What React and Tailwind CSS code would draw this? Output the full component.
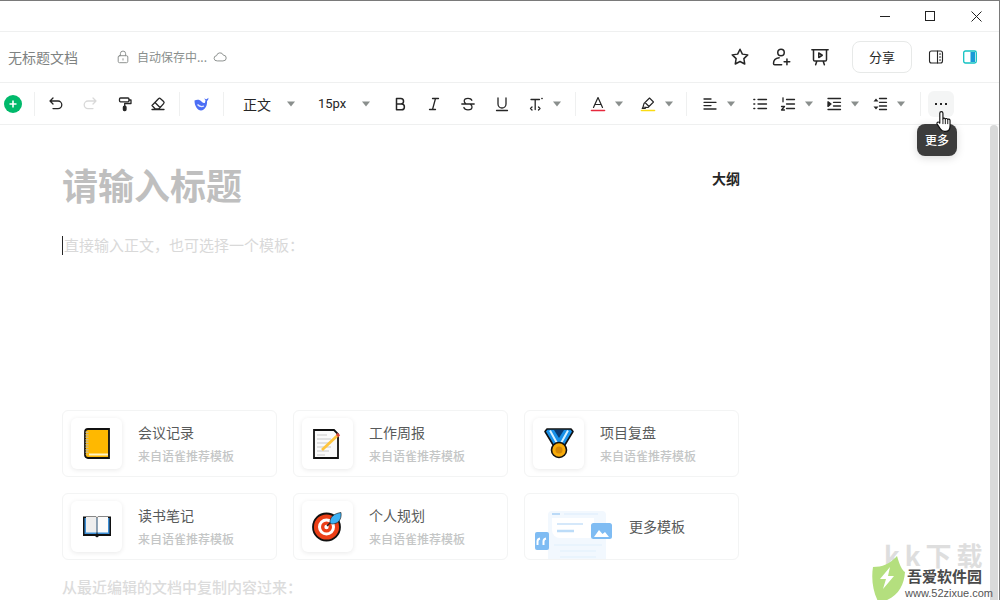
import { useState } from "react";

const Caret = ({ className = "" }) => (
  <svg width="10" height="6" viewBox="0 0 10 6" className={className}>
    <path d="M1 .5h8L5 5.500z" fill="#8a8f8d" />
  </svg>
);

const Sep = ({ className = "" }) => <div className={`w-px h-6 bg-[#eff0f0] shrink-0 ${className}`} />;

const Ico = ({ children, size = 16, box = 16, className = "", sw = 1.3, color = "#262626" }) => (
  <svg
    width={size}
    height={size}
    viewBox={`0 0 ${box} ${box}`}
    fill="none"
    stroke={color}
    strokeWidth={sw}
    strokeLinecap="round"
    strokeLinejoin="round"
    className={`shrink-0 ${className}`}
  >
    {children}
  </svg>
);

const Lines = ({ rows }) =>
  rows.map((r, i) => <path key={i} d={r} />);

const Card = ({ icon, title }) => (
  <div className="h-[67px] border border-[#f3f4f4] rounded-md flex items-center pl-2 bg-white">
    <div className="w-[51px] h-[51px] rounded-md bg-white shadow-[0_1px_5px_rgba(0,0,0,0.09)] flex items-center justify-center shrink-0">
      {icon}
    </div>
    <div className="ml-4 mb-[2px]">
      <div className="text-sm leading-5 text-[#585a5a]">{title}</div>
      <div className="text-xs leading-4 mt-[6px] text-[#c4c6c6] font-medium">来自语雀推荐模板</div>
    </div>
  </div>
);

const NoteBook = () => (
  <svg width="26" height="31" viewBox="0 0 26 31">
    <path d="M4 1h21v29H4a3 3 0 0 1-3-3V4a3 3 0 0 1 3-3z" fill="#ffb800" stroke="#111" strokeWidth="1.800" />
    <path d="M3 3.500v23" stroke="#c9b98a" strokeWidth="3" strokeDasharray="1.500 1" />
    <path d="M5 26.500h19" stroke="#fff3c4" strokeWidth="2" />
  </svg>
);

const Report = () => (
  <svg width="30" height="30" viewBox="0 0 30 30">
    <path d="M1 1h20l4 4v24H1z" fill="#fafafa" stroke="#111" strokeWidth="1.800" />
    <path d="M4 6h10M4 10h14M4 14h14M4 18h14M4 22h12M4 26h8" stroke="#c8c8c8" strokeWidth="1.200" />
    <path d="M9 21 25 6" stroke="#ffc53d" strokeWidth="2.800" />
    <path d="m24 7 2-2" stroke="#d4453a" strokeWidth="3.200" />
  </svg>
);

const Medal = () => (
  <svg width="30" height="31" viewBox="0 0 30 31">
    <path d="M1 3.500 3 1h24l2 2.500L19 20h-8z" fill="#1890e8" stroke="#111" strokeWidth="1.600" strokeLinejoin="round" />
    <path d="M6 2.500 14 17M24 2.500 16 17" stroke="#d6f0ff" strokeWidth="2" />
    <path d="M10 2h10l-5 8z" fill="#0b3b73" />
    <circle cx="15" cy="22" r="7.500" fill="#f7ab0a" stroke="#111" strokeWidth="1.600" />
    <circle cx="15" cy="22" r="3.500" fill="#d48806" />
  </svg>
);

const OpenBook = () => (
  <svg width="30" height="25" viewBox="0 0 30 25">
    <path d="M1 2.500h13l1 1 1-1h13V22H17l-2 1.500-2-1.500H1z" fill="#111" />
    <path d="M2.500 4h12v16h-12z" fill="#3d8fd6" />
    <path d="M15.500 4h12v16h-12z" fill="#3d8fd6" />
    <path d="M4 3h10.500v15.500H4z" fill="#eeeeee" />
    <path d="M15.500 3H26v15.500H15.500z" fill="#fbfbfb" />
  </svg>
);

const Target = () => (
  <svg width="31" height="31" viewBox="0 0 31 31">
    <circle cx="14.500" cy="16" r="13.500" fill="#ec3f17" stroke="#111" strokeWidth="1.800" />
    <circle cx="14.500" cy="16" r="8.500" fill="#fff" />
    <circle cx="14.500" cy="16" r="5.500" fill="#ec3f17" />
    <circle cx="14.500" cy="16" r="2.200" fill="#fff" />
    <path d="M15 15 21 9" stroke="#222" strokeWidth="1.500" />
    <path d="M18 12c-.5-6 4-9.500 11-10.500 1 7-3 11.500-9 11.500z" fill="#3db2f5" stroke="#111" strokeWidth=".6" />
  </svg>
);

const MoreArt = () => (
  <svg width="80" height="50" viewBox="0 0 80 50" className="block">
    <path d="M14 6a4 4 0 0 1 4-4h50a4 4 0 0 1 4 4v44H14z" fill="#f2f8fe" />
    <path d="M18 5h8" stroke="#a9d0f5" strokeWidth="1.500" />
    <path d="M30 5h34" stroke="#e3f0fc" strokeWidth="1.500" />
    <path d="M18 9h42v16a4 4 0 0 1-4 4H26a8 8 0 0 1-8-8z" fill="#fff" />
    <path d="M23 15h26" stroke="#d5e8fa" strokeWidth="2.200" />
    <path d="M23 22h17" stroke="#bcdcf8" strokeWidth="2.500" />
    <path d="M20 36h48M26 42h36M26 48h36" stroke="#e6f2fd" strokeWidth="1.600" />
    <rect x="57" y="14" width="21" height="16" rx="2.500" fill="#7fbcf3" />
    <path d="M60 28l5-7 3.500 4 2.500-2 4 5z" fill="#fff" />
    <rect x="1" y="23" width="14" height="18" rx="2" fill="#7fbcf3" />
    <path d="M3.500 36v-3.500q0-2.500 2.500-3M9.500 36v-3.500q0-2.500 2.500-3" stroke="#fff" strokeWidth="2" fill="none" />
  </svg>
);

export default function App() {
  const [doc] = useState([
    { title: "会议记录", icon: <NoteBook /> },
    { title: "工作周报", icon: <Report /> },
    { title: "项目复盘", icon: <Medal /> },
    { title: "读书笔记", icon: <OpenBook /> },
    { title: "个人规划", icon: <Target /> },
  ]);

  return (
    <div className="relative w-[1000px] h-[600px] overflow-hidden bg-white border-t border-r border-[#7a7a7a] font-['Noto_Sans_CJK_SC',sans-serif] text-[#262626]">
      {/* window bar */}
      <div className="h-[31px] flex items-center justify-end border-b border-[#eff0f0]">
        <div className="w-[10px] h-px bg-[#222] mr-[35px]" />
        <div className="w-[10px] h-[10px] border border-[#222] mr-[36px]" />
        <svg width="11" height="11" viewBox="0 0 11 11" className="mr-[17px]">
          <path d="M.5.5l10 10M10.500.5l-10 10" stroke="#222" />
        </svg>
      </div>

      {/* doc header */}
      <div className="h-[51px] flex items-center border-b border-[#eff0f0] pl-2 pr-[21px]">
        <span className="text-sm text-[#7e8281]">无标题文档</span>
        <Ico size={14} className="ml-[38px]" color="#8a8f8d" sw={1.1}>
          <rect x="2.500" y="6.500" width="11" height="8" rx="1.500" />
          <path d="M5 6.500V4.200a3 3 0 0 1 6 0v2.300M8 10v1.500" />
        </Ico>
        <span className="ml-[7px] text-xs text-[#8a8f8d]">自动保存中...</span>
        <Ico size={14} className="ml-[6px]" color="#8a8f8d" sw={1.1}>
          <path d="M4.500 12.500a3 3 0 0 1-.4-6 4 4 0 0 1 7.700-.6 3.300 3.300 0 0 1 0 6.600z" />
        </Ico>
        <div className="flex-1" />
        <Ico size={20} sw={1.2}>
          <path d="m8 1.800 1.900 3.900 4.300.6-3.100 3 .7 4.300L8 11.600l-3.800 2 .7-4.300-3.100-3 4.300-.6z" />
        </Ico>
        <Ico size={20} className="ml-[21px]" sw={1.2}>
          <circle cx="8" cy="4.300" r="2.600" />
          <path d="M6.500 8.600C3.800 9 2 10.800 2 13.200c0 .6.400 1 1 1h5.500M10.500 11.800h4.500M12.750 9.500v4.600" />
        </Ico>
        <Ico size={20} className="ml-[19px]" sw={1.2}>
          <path d="M1.500 2.200h13M2.800 2.200v8a1 1 0 0 0 1 1h8.400a1 1 0 0 0 1-1v-8M5.500 11.200l-1 3M10.500 11.200l1 3" />
          <path d="M7 4.800v3.600l2.800-1.800z" />
        </Ico>
        <button className="ml-[22px] w-[60px] h-8 border border-[#e7e9e8] rounded-lg text-[13px] text-[#262626]">分享</button>
        <Ico size={16} className="ml-4" sw={1.1}>
          <rect x="1.500" y="2" width="13" height="12" rx="2" />
          <path d="M9.500 2v12M11.500 5h1.200M11.500 8h1.200M11.500 11h1.200" />
        </Ico>
        <svg width="16" height="16" viewBox="0 0 16 16" className="ml-[18px] shrink-0">
          <rect x="1.700" y="2" width="12.600" height="12" rx="1.800" fill="#fff" stroke="#13c2c2" strokeWidth="1.300" />
          <rect x="8.500" y="3" width="4.500" height="10" fill="#1a9bd7" />
        </svg>
      </div>

      {/* toolbar */}
      <div className="h-[42px] flex items-center border-b border-[#eff0f0] pl-1">
        <svg width="18" height="18" viewBox="0 0 18 18" className="shrink-0">
          <circle cx="9" cy="9" r="9" fill="#00b96b" />
          <path d="M5.500 9h7M9 5.500v7" stroke="#fff" strokeWidth="1.600" />
        </svg>
        <Sep className="ml-3" />
        <Ico className="ml-[13px]">
          <path d="M5 2 2 5l3 3M2 5h8a3.800 3.800 0 0 1 0 7.600H5" />
        </Ico>
        <Ico className="ml-[18px]" color="#d9d9d9">
          <path d="m11 2 3 3-3 3M14 5H6a3.800 3.800 0 0 0 0 7.600h5" />
        </Ico>
        <Ico className="ml-[19px]" sw={1.3}>
          <rect x="2.500" y="2" width="9.500" height="3.800" rx="1" />
          <path d="M12 4h2v3.500H7.700v2.700" />
          <rect x="6.400" y="10.200" width="2.600" height="4.300" rx="1" fill="#262626" />
        </Ico>
        <Ico className="ml-[17px]" sw={1.3}>
          <path d="m2 9.500 6.500-6.800a1.500 1.500 0 0 1 2.100 0l3 2.800a1.500 1.500 0 0 1 0 2.100L8.800 13H5.300zM5 6.500l5 5M2 13.500h12" />
        </Ico>
        <Sep className="ml-[13px]" />
        <svg width="16" height="14" viewBox="0 0 16 14" className="ml-[14px] shrink-0">
          <path d="M.5 3.500C3 2 6 2.500 7.500 4.500c1 1.300 2 1.700 3.500 1.200L11.500 3 10 1.500l2.500.8L14.500.8l-.5 2.400-1 .6c.5 4.700-2 9.700-6 9.700C3.500 13.500.5 9 .5 3.500z" fill="#4c6ef5" />
          <path d="M3.500 7.500c1.800 2 4 2.600 6.500 1.500" stroke="#e3e9ff" strokeWidth="1.300" fill="none" />
        </svg>
        <Sep className="ml-[13px]" />
        <span className="ml-[19px] w-[29px] text-sm leading-none">正文</span>
        <Caret className="ml-[14px]" />
        <span className="ml-[22px] w-7 text-[13px] leading-none font-['Roboto',sans-serif]">15px</span>
        <Caret className="ml-[15px]" />
        <Ico className="ml-[21px]" sw={1.5}>
          <path d="M4.500 2.500h4.300a2.700 2.700 0 0 1 0 5.500H4.500zM4.500 8h5a2.900 2.900 0 0 1 0 5.800h-5z" />
        </Ico>
        <Ico className="ml-[18px]" sw={1.3}>
          <path d="M6.500 2.500h6M3.500 13.500h6M9.500 2.500l-3 11" />
        </Ico>
        <Ico className="ml-[18px]" sw={1.3}>
          <path d="M11.800 4.300C11.300 3 10 2.300 8 2.300c-2.400 0-3.800 1.100-3.800 2.800 0 1 .5 1.900 1.500 2.400M1.800 8h12.400M10.500 8.500c1 .6 1.500 1.300 1.500 2.400 0 1.800-1.600 2.900-4 2.900-2.200 0-3.600-.8-4.100-2.300" />
        </Ico>
        <Ico className="ml-[18px]" sw={1.3}>
          <path d="M4 2v6a4 4 0 0 0 8 0V2M2.500 14.500h11" />
        </Ico>
        <Ico className="ml-[19px]" sw={1.3}>
          <path d="M2 3.500h8.500M6.200 3.500v10M12.800 2.500h.4M3 11l-1.500 1.500L3 14M9.500 11l1.500 1.500L9.500 14" />
        </Ico>
        <Caret className="ml-[7px]" />
        <Sep className="ml-[13px]" />
        <Ico className="ml-[14px]" sw={1.200}>
          <path d="m3.500 11.500 4.500-10 4.500 10M5 8.500h6" />
          <path d="M1.500 14.500h13" stroke="#e6293d" strokeWidth="1.600" />
        </Ico>
        <Caret className="ml-[8px]" />
        <Ico className="ml-[16px]" sw={1.100}>
          <path d="m3 11 1-3.500L9.500 2l4 4L8 11.500z M5 6.500l4 4M3 11l-.8 1.500h3L6 11.500" />
          <path d="M1.500 14.500h13" stroke="#fadb14" strokeWidth="1.600" />
        </Ico>
        <Caret className="ml-[8px]" />
        <Sep className="ml-[12px]" />
        <Ico className="ml-[15px]" sw={1.3}>
          <Lines rows={["M2 3h7", "M2 6.300h12", "M2 9.600h7", "M2 13h12"]} />
        </Ico>
        <Caret className="ml-[8px]" />
        <Ico className="ml-[16px]" sw={1.3}>
          <Lines rows={["M6 3.500h8.500", "M6 8h8.500", "M6 12.500h8.500", "M1.800 3.500h1", "M1.800 8h1", "M1.800 12.500h1"]} />
        </Ico>
        <Ico className="ml-[12px]" sw={1.3}>
          <Lines rows={["M6.500 3.500h8", "M6.500 8h8", "M6.500 12.500h8", "M3 1.800v4", "M1.500 10.500h3l-3 3.500h3"]} />
        </Ico>
        <Caret className="ml-[8px]" />
        <Ico className="ml-[12px]" sw={1.3}>
          <Lines rows={["M2 2.500h12.500", "M7.500 6.300h7", "M7.500 10h7", "M2 13.500h12.500"]} />
          <path d="M2 5.800v4.600L5 8z" fill="#262626" />
        </Ico>
        <Caret className="ml-[8px]" />
        <Ico className="ml-[12px]" sw={1.3}>
          <Lines rows={["M7.500 2.500h7", "M7.500 6.300h7", "M7.500 10h7", "M7.500 13.500h7"]} />
          <path d="M1.500 5.500h5L4 2.500zM1.500 10.500h5L4 13.500z" fill="#262626" stroke="none" />
        </Ico>
        <Caret className="ml-[8px]" />
        <Sep className="ml-[14px]" />
        <div className="ml-[7px] w-[26px] h-[26px] rounded-md bg-[#f4f5f5] flex items-center justify-center gap-[3px]">
          <span className="w-[2px] h-[2px] bg-[#262626]" />
          <span className="w-[2px] h-[2px] bg-[#262626]" />
          <span className="w-[2px] h-[2px] bg-[#262626]" />
        </div>
      </div>

      {/* editor */}
      <div className="flex h-[476px]">
        <div className="flex-1 min-w-0 pl-[62px] overflow-hidden">
          <div className="w-[678px] flex items-start justify-between pt-[33px]">
            <h1 className="text-4xl leading-[52px] font-bold text-[#bfbfbf]">请输入标题</h1>
            <span className="text-sm leading-5 font-bold mt-[10px]">大纲</span>
          </div>
          <div className="flex items-center mt-[25px] h-[20px]">
            <div className="w-px h-[19px] bg-[#262626]" />
            <span className="ml-[1px] text-[15px] text-[#d9d9d9]">直接输入正文，也可选择一个模板：</span>
          </div>
          <div className="w-[677px] grid grid-cols-3 gap-4 mt-[155px]">
            {doc.map((d) => (
              <Card key={d.title} title={d.title} icon={d.icon} />
            ))}
            <div className="h-[67px] border border-[#f3f4f4] rounded-md flex items-end pl-[9px] overflow-hidden">
              <MoreArt />
              <span className="ml-[15px] mb-[23px] text-sm leading-5 text-[#585a5a]">更多模板</span>
            </div>
          </div>
          <p className="mt-[17px] text-[15px] leading-5 font-medium text-[#dcdcdc]">从最近编辑的文档中复制内容过来：</p>
        </div>
        <div className="w-2 mr-px shrink-0 bg-[#d9dada] rounded-t-sm" />
      </div>

      {/* tooltip */}
      <div className="absolute left-[917px] top-[123px] w-10 h-8 rounded-lg bg-[#3c3c3c] shadow-[0_2px_8px_rgba(0,0,0,0.15)] flex items-center justify-center text-xs font-medium text-white">
        更多
      </div>

      {/* hand cursor */}
      <svg width="17" height="23" viewBox="0 0 16 22" className="absolute left-[936px] top-[109px]">
        <path
          d="M5 1.500c1 0 1.500.6 1.500 1.500v5.500c.3-1 2-1 2.300.2.400-.9 2-.8 2.300.4.500-.7 2.200-.5 2.200 1V15c0 3-1.500 5.500-4.500 5.500H8c-2 0-3-1-4-2.500L1 13.500c-.6-1 0-2 1-2 .7 0 1.300.7 1.500 1.200V3c0-1 .5-1.500 1.500-1.500z"
          fill="#fff"
          stroke="#111"
          strokeWidth="1.100"
          strokeLinejoin="round"
        />
        <path d="M6.500 8.500v5M8.800 8.700v4.800M11.100 9.100v4.400" stroke="#111" strokeWidth=".9" />
      </svg>

      {/* site watermark */}
      <div className="absolute left-[870px] top-[544px] w-[122px] h-[56px] pointer-events-none">
        <div className="absolute left-[14px] top-0 h-5 text-[26px] leading-5 font-bold tracking-[5px] text-[#dedede] whitespace-nowrap">kk下载</div>
        <svg width="38" height="52" viewBox="0 0 38 52" className="absolute left-0 top-[8px]">
          <path d="M3 14c9 0 17-3 24-11 3 10 5 14 8 16-1 15-8 26-26 31C3 40 1 26 3 14z" fill="#b4df7e" />
          <path d="M20 14 10 26h6l-3 10 11-13h-6z" fill="#fff" />
        </svg>
        <div className="absolute left-[37px] top-[21px] text-[15px] leading-5 font-bold text-[#4a4a4a] whitespace-nowrap">吾爱软件园</div>
        <div className="absolute left-[35px] top-[40px] text-[11px] leading-4 text-[#555] whitespace-nowrap font-['Liberation_Sans',sans-serif]">www.52zixue.com</div>
      </div>
    </div>
  );
}
